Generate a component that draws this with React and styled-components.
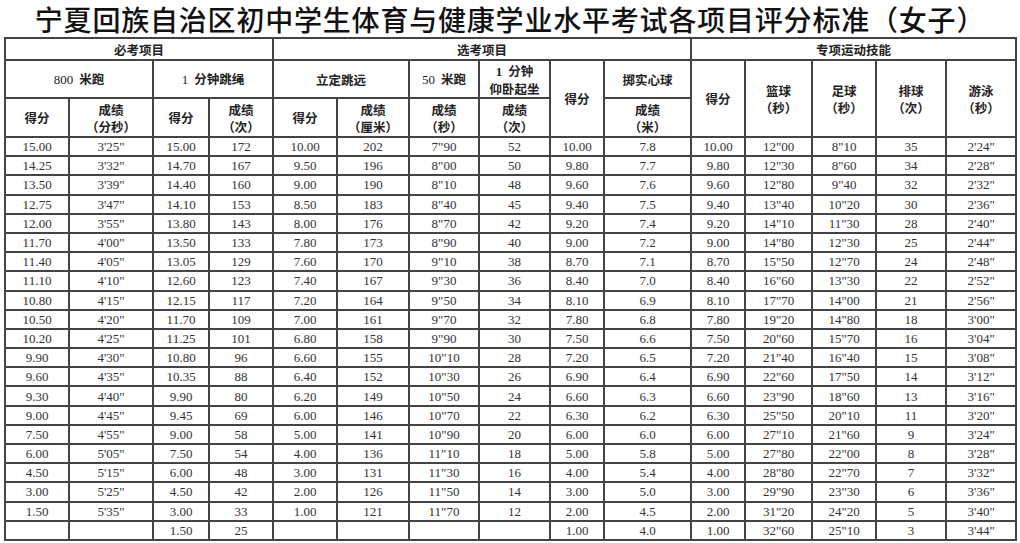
import React from "react";
import styled, { createGlobalStyle } from "styled-components";

const GlobalStyle = createGlobalStyle`
  html, body {
    margin: 0;
    padding: 0;
    background: #ffffff;
  }
`;

const Page = styled.div`
  width: 1020px;
  height: 543px;
  overflow: hidden;
  background: #fff;
`;

const Title = styled.h1`
  margin: 0;
  padding: 1px 0 0;
  text-align: center;
  font-family: "Noto Sans CJK SC", sans-serif;
  font-weight: 500;
  font-size: 28px;
  line-height: 36px;
  color: #111;
  letter-spacing: 0.8px;
  white-space: nowrap;
`;

const Table = styled.table`
  margin-left: 4px;
  width: 1011px;
  table-layout: fixed;
  border-collapse: collapse;
`;

const HeadRow = styled.tr`
  height: ${(p) => p.h}px;
`;

const HeadCell = styled.th`
  border: 2px solid #444;
  padding: 0;
  font-family: "Noto Sans CJK SC", sans-serif;
  font-weight: 700;
  font-size: 12.5px;
  line-height: 17px;
  color: #222;
  text-align: center;
  vertical-align: middle;
`;

const Num = styled.span`
  font-family: "Liberation Serif", serif;
  font-weight: ${(p) => (p.bold ? 700 : 400)};
  font-size: 13px;
  margin-right: 6px;
`;

const Row = styled.tr`
  height: 19.2px;
`;

const Cell = styled.td`
  border: 2px solid #444;
  padding: 0;
  height: 15px;
  font-family: "Liberation Serif", serif;
  font-size: 13px;
  line-height: 15px;
  color: #333;
  text-align: center;
  white-space: nowrap;
`;

const widths = [64, 84, 56, 64, 64, 72, 70, 71, 54, 87, 54, 67, 64, 70, 70];

const cols = [
  ["15.00","14.25","13.50","12.75","12.00","11.70","11.40","11.10","10.80","10.50","10.20","9.90","9.60","9.30","9.00","7.50","6.00","4.50","3.00","1.50",""],
  ["3'25\"","3'32\"","3'39\"","3'47\"","3'55\"","4'00\"","4'05\"","4'10\"","4'15\"","4'20\"","4'25\"","4'30\"","4'35\"","4'40\"","4'45\"","4'55\"","5'05\"","5'15\"","5'25\"","5'35\"",""],
  ["15.00","14.70","14.40","14.10","13.80","13.50","13.05","12.60","12.15","11.70","11.25","10.80","10.35","9.90","9.45","9.00","7.50","6.00","4.50","3.00","1.50"],
  ["172","167","160","153","143","133","129","123","117","109","101","96","88","80","69","58","54","48","42","33","25"],
  ["10.00","9.50","9.00","8.50","8.00","7.80","7.60","7.40","7.20","7.00","6.80","6.60","6.40","6.20","6.00","5.00","4.00","3.00","2.00","1.00",""],
  ["202","196","190","183","176","173","170","167","164","161","158","155","152","149","146","141","136","131","126","121",""],
  ["7\"90","8\"00","8\"10","8\"40","8\"70","8\"90","9\"10","9\"30","9\"50","9\"70","9\"90","10\"10","10\"30","10\"50","10\"70","10\"90","11\"10","11\"30","11\"50","11\"70",""],
  ["52","50","48","45","42","40","38","36","34","32","30","28","26","24","22","20","18","16","14","12",""],
  ["10.00","9.80","9.60","9.40","9.20","9.00","8.70","8.40","8.10","7.80","7.50","7.20","6.90","6.60","6.30","6.00","5.00","4.00","3.00","2.00","1.00"],
  ["7.8","7.7","7.6","7.5","7.4","7.2","7.1","7.0","6.9","6.8","6.6","6.5","6.4","6.3","6.2","6.0","5.8","5.4","5.0","4.5","4.0"],
  ["10.00","9.80","9.60","9.40","9.20","9.00","8.70","8.40","8.10","7.80","7.50","7.20","6.90","6.60","6.30","6.00","5.00","4.00","3.00","2.00","1.00"],
  ["12\"00","12\"30","12\"80","13\"40","14\"10","14\"80","15\"50","16\"60","17\"70","19\"20","20\"60","21\"40","22\"60","23\"90","25\"50","27\"10","27\"80","28\"80","29\"90","31\"20","32\"60"],
  ["8\"10","8\"60","9\"40","10\"20","11\"30","12\"30","12\"70","13\"30","14\"00","14\"80","15\"70","16\"40","17\"50","18\"60","20\"10","21\"60","22\"00","22\"70","23\"30","24\"20","25\"10"],
  ["35","34","32","30","28","25","24","22","21","18","16","15","14","13","11","9","8","7","6","5","3"],
  ["2'24\"","2'28\"","2'32\"","2'36\"","2'40\"","2'44\"","2'48\"","2'52\"","2'56\"","3'00\"","3'04\"","3'08\"","3'12\"","3'16\"","3'20\"","3'24\"","3'28\"","3'32\"","3'36\"","3'40\"","3'44\""],
];

const rows = cols[0].map((_, r) => cols.map((c) => c[r]));

const Two = ({ a, b }) => (
  <>
    {a}
    <br />
    {b}
  </>
);

export default function App() {
  return (
    <Page>
      <GlobalStyle />
      <Title>宁夏回族自治区初中学生体育与健康学业水平考试各项目评分标准（女子）</Title>
      <Table>
        <colgroup>
          {widths.map((w, i) => (
            <col key={i} style={{ width: w }} />
          ))}
        </colgroup>
        <thead>
          <HeadRow h={22}>
            <HeadCell colSpan={4}>必考项目</HeadCell>
            <HeadCell colSpan={6}>选考项目</HeadCell>
            <HeadCell colSpan={5}>专项运动技能</HeadCell>
          </HeadRow>
          <HeadRow h={38}>
            <HeadCell colSpan={2}>
              <Num>800</Num>米跑
            </HeadCell>
            <HeadCell colSpan={2}>
              <Num>1</Num>分钟跳绳
            </HeadCell>
            <HeadCell colSpan={2}>立定跳远</HeadCell>
            <HeadCell>
              <Num>50</Num>米跑
            </HeadCell>
            <HeadCell>
              <Two a={<><Num bold>1</Num>分钟</>} b="仰卧起坐" />
            </HeadCell>
            <HeadCell rowSpan={2}>得分</HeadCell>
            <HeadCell>掷实心球</HeadCell>
            <HeadCell rowSpan={2}>得分</HeadCell>
            <HeadCell rowSpan={2}>
              <Two a="篮球" b="（秒）" />
            </HeadCell>
            <HeadCell rowSpan={2}>
              <Two a="足球" b="（秒）" />
            </HeadCell>
            <HeadCell rowSpan={2}>
              <Two a="排球" b="（次）" />
            </HeadCell>
            <HeadCell rowSpan={2}>
              <Two a="游泳" b="（秒）" />
            </HeadCell>
          </HeadRow>
          <HeadRow h={39}>
            <HeadCell>得分</HeadCell>
            <HeadCell>
              <Two a="成绩" b="（分秒）" />
            </HeadCell>
            <HeadCell>得分</HeadCell>
            <HeadCell>
              <Two a="成绩" b="（次）" />
            </HeadCell>
            <HeadCell>得分</HeadCell>
            <HeadCell>
              <Two a="成绩" b="（厘米）" />
            </HeadCell>
            <HeadCell>
              <Two a="成绩" b="（秒）" />
            </HeadCell>
            <HeadCell>
              <Two a="成绩" b="（次）" />
            </HeadCell>
            <HeadCell>
              <Two a="成绩" b="（米）" />
            </HeadCell>
          </HeadRow>
        </thead>
        <tbody>
          {rows.map((row, r) => (
            <Row key={r}>
              {row.map((v, c) => (
                <Cell key={c}>{v}</Cell>
              ))}
            </Row>
          ))}
        </tbody>
      </Table>
    </Page>
  );
}
